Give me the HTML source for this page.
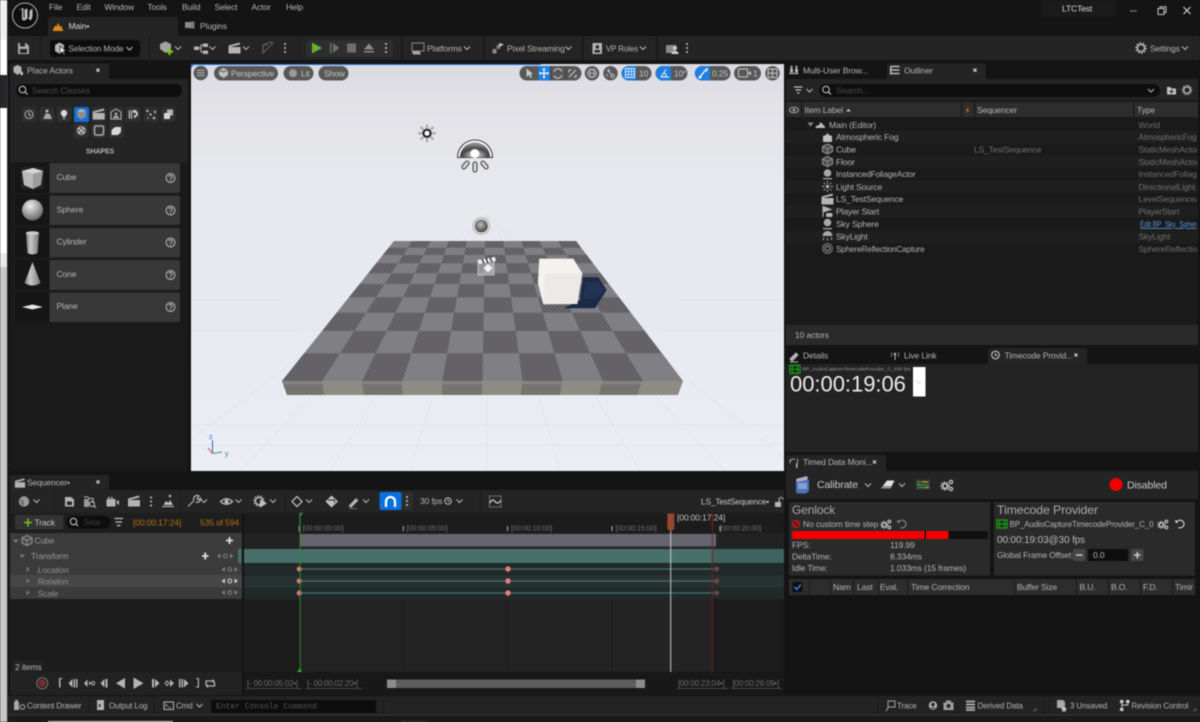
<!DOCTYPE html>
<html lang="en">
<head>
<meta charset="utf-8">
<title>LTCTest - Unreal Editor</title>
<style>
html,body{margin:0;padding:0;background:#141414;width:1200px;height:722px;overflow:hidden}
svg{display:block;position:absolute;left:0;top:0;filter:blur(.45px)}
text{font-family:"Liberation Sans",sans-serif;font-size:8.5px;fill:#b4b4b4;letter-spacing:-.12px}
.d{fill:#6f6f6f}
.w{fill:#d8d8d8}
.m{font-family:"Liberation Mono",monospace;font-size:8px;fill:#555;letter-spacing:0}
.o{fill:#b5700f}
.s{stroke:#b4b4b4;fill:none;stroke-width:1.1}
.f{fill:#b4b4b4}
.sep{fill:#1a1a1a}
</style>
</head>
<body>
<svg width="1200" height="722" viewBox="0 0 1200 722" xmlns="http://www.w3.org/2000/svg">
<defs>
<linearGradient id="sky" x1="0" y1="0" x2="0" y2="1">
<stop offset="0" stop-color="#dadae1"/><stop offset=".1" stop-color="#e2e2e7"/><stop offset=".3" stop-color="#e8e9ee"/><stop offset=".6" stop-color="#e6e9f0"/><stop offset="1" stop-color="#ebeef4"/>
</linearGradient>
<linearGradient id="cyl" x1="0" y1="0" x2="1" y2="0"><stop offset="0" stop-color="#777"/><stop offset=".35" stop-color="#c9c9c9"/><stop offset="1" stop-color="#777"/></linearGradient>
<radialGradient id="sph" cx=".4" cy=".3" r=".8"><stop offset="0" stop-color="#eee"/><stop offset="1" stop-color="#555"/></radialGradient>
<radialGradient id="sph2" cx=".45" cy=".4" r=".7"><stop offset="0" stop-color="#bdbdbd"/><stop offset="1" stop-color="#2e2e2e"/></radialGradient>
<radialGradient id="dome" cx=".5" cy=".85" r=".85"><stop offset="0" stop-color="#eee"/><stop offset=".5" stop-color="#444"/><stop offset="1" stop-color="#aaa"/></radialGradient>
<pattern id="tex" width="4" height="4" patternUnits="userSpaceOnUse"><rect width="2" height="2" fill="#fff" opacity=".06"/><rect x="2" y="2" width="2" height="2" fill="#fff" opacity=".06"/></pattern>
<clipPath id="typeclip"><rect x="1136" y="118" width="61" height="140"/></clipPath>
<clipPath id="vp"><rect x="191" y="64" width="593" height="407"/></clipPath>
<path id="chev" d="M-3-1.5 0 1.5 3-1.5" fill="none" stroke="#b4b4b4" stroke-width="1.1"/>
<g id="dots"><circle cy="-4" r="1" fill="#c8c8c8"/><circle r="1" fill="#c8c8c8"/><circle cy="4" r="1" fill="#c8c8c8"/></g>
<g id="gear"><circle r="3.6" fill="none" stroke="#b4b4b4" stroke-width="1.5"/><circle r="5" fill="none" stroke="#b4b4b4" stroke-width="1.5" stroke-dasharray="1.6 1.5"/></g>
<g id="gears"><circle cx="-2" cy="1" r="2.4" fill="none" stroke="#cfcfcf" stroke-width="1.5"/><circle cx="-2" cy="1" r="4" fill="none" stroke="#cfcfcf" stroke-width="1.3" stroke-dasharray="1.5 1.4"/><circle cx="4" cy="-3" r="1.6" fill="none" stroke="#cfcfcf" stroke-width="1.2"/><circle cx="4" cy="4" r="1.6" fill="none" stroke="#cfcfcf" stroke-width="1.2"/></g>
<g id="clap"><rect x="-6" y="-1" width="12" height="6.5" fill="#b4b4b4"/><path d="M-6-2.5 5-5.5 5.6-3.5-5.5-.8z" fill="#b4b4b4"/></g>
<g id="mesh"><path d="M0-5 5-2.5 5 2.5 0 5-5 2.5-5-2.5z" fill="#4a4a4a" stroke="#8e8e8e" stroke-width="1.1"/><path d="M-5-2.5 0 0 5-2.5M0 0V5" stroke="#8e8e8e" stroke-width="1" fill="none"/></g>
<g id="film"><rect x="-5" y="-4" width="10" height="8" fill="none" stroke="#0fa80f" stroke-width="1.2"/><path d="M-2.5-4V4M2.5-4V4M-5 0H5" stroke="#0fa80f" stroke-width="1"/></g>
<g id="undo"><path d="M-3.5-1A3.8 3.8 0 1 1-1.5 3.4" fill="none" stroke="#cfcfcf" stroke-width="1.2"/><path d="M-5.5-3.5-2.8-3.5-3.2-.3z" fill="#cfcfcf"/></g>
<g id="kf"><path d="M0 0 3.500-2.500V2.500z" fill="#7c7c7c"/><circle cx="8.300" r="1.900" fill="none" stroke="#7c7c7c" stroke-width="1.100"/><path d="M16.500 0 13-2.500V2.500z" fill="#7c7c7c"/></g>
<g id="help"><circle r="4.4" fill="none" stroke="#b4b4b4" stroke-width="1.1"/><path d="M-1.5-1.2A1.6 1.5 0 1 1 .5.3C0 .6 0 1 0 1.4" fill="none" stroke="#b4b4b4"/><circle cy="2.6" r=".6" fill="#b4b4b4"/></g>
</defs>

<!-- base -->
<rect width="1200" height="722" fill="#141414"/>

<!-- left strip from the window behind -->
<rect x="0" y="0" width="7" height="40" fill="#f0f0f0"/>
<rect x="0" y="40" width="7" height="35" fill="#fff"/>
<rect x="0" y="75" width="7" height="33" fill="#25272a"/>
<rect x="0" y="108" width="7" height="145" fill="#fff"/>
<rect x="0" y="253" width="7" height="14" fill="#e9e9e9"/>
<rect x="0" y="267" width="7" height="455" fill="#c6c6c6"/>
<rect x="7" y="0" width="1" height="722" fill="#333"/>

<!-- title bar -->
<circle cx="25" cy="15.5" r="12.5" fill="#0e0e0e" stroke="#b0b0b0" stroke-width="1"/>
<path d="M19 11C20.5 9.5 21.6 9 22 9V18.5C22 20.5 24 21 25.500 20L28 18 30.500 20.500C32 19 32.500 17 32.500 14V8.500C31 9.500 29.800 10.500 29.500 11.500V17L27.500 18.500V8.500L24.500 9.500V18.500C23.500 18 23.500 17.500 23.500 16V8C21.500 8.300 19.500 9.500 19 11Z" fill="#bdbdbd"/>
<text x="49" y="10">File</text>
<text x="76.500" y="10">Edit</text>
<text x="104.500" y="10">Window</text>
<text x="147.500" y="10">Tools</text>
<text x="182" y="10">Build</text>
<text x="214.500" y="10">Select</text>
<text x="251.500" y="10">Actor</text>
<text x="286" y="10">Help</text>

<path d="M48 36V20Q48 17 51 17H175Q178 17 178 20V36z" fill="#242424"/>
<path d="M53 30H63L61 25.500 59.500 26.500 58 22.500 56.500 26.500 55 25.500z" fill="#d88a16"/>
<rect x="53" y="29.500" width="10" height="1.500" fill="#d88a16"/>
<text x="68.500" y="29" class="w">Main•</text>
<circle cx="190" cy="25" r="3.200" fill="#8a8a8a"/><rect x="185" y="22" width="4" height="6" fill="#8a8a8a"/><rect x="191" y="21.500" width="3.500" height="7" fill="#777"/>
<text x="200" y="29">Plugins</text>

<path d="M1041 0H1116V14Q1116 17 1113 17H1044Q1041 17 1041 14z" fill="#1a1a1a"/>
<text x="1062" y="11.500" class="w">LTCTest</text>
<rect x="1130" y="10.500" width="7" height="1" fill="#8a8a8a"/>
<rect x="1158" y="8.500" width="6" height="6" fill="none" stroke="#c4c4c4"/><path d="M1160 8.500V6.800H1166V12.500H1164.500" fill="none" stroke="#c4c4c4"/>
<path d="M1183.500 7 1190.500 14M1190.500 7 1183.500 14" stroke="#d8d8d8" stroke-width="1.100"/>

<!-- main toolbar -->
<rect x="8" y="36" width="1192" height="24" fill="#242424"/>
<rect x="40" y="36" width="1" height="24" class="sep"/>
<rect x="149" y="36" width="1" height="24" class="sep"/>
<rect x="299" y="36" width="1" height="24" class="sep"/>
<rect x="401" y="36" width="2" height="24" class="sep"/>
<rect x="483" y="36" width="2" height="24" class="sep"/>
<rect x="582" y="36" width="2" height="24" class="sep"/>
<rect x="656" y="36" width="2" height="24" class="sep"/>
<path d="M18 43H26L29 46V54H18z" fill="#a9a9a9"/><rect x="20" y="43" width="5" height="3.500" fill="#242424"/><rect x="20" y="49" width="7" height="4" fill="#242424"/>
<rect x="50" y="40" width="90" height="17" rx="3" fill="#0d0d0d"/>
<path d="M55 45 59.500 42.500 64 45V51L59.500 54 55 51z" fill="#b4b4b4"/><path d="M60 46 66 51 63.500 51.500 65 54.500 63.800 55 62.500 52 60 54z" fill="#eee" stroke="#0d0d0d" stroke-width=".6"/>
<text x="68.500" y="51.300" textLength="55" lengthAdjust="spacingAndGlyphs">Selection Mode</text>
<use href="#chev" x="129.500" y="48.500"/>
<path d="M160 44 165.500 41.500 171 44V49L165.500 53 160 49z" fill="#a2a2a2"/>
<path d="M166 51.500H173M169.500 48V55" stroke="#7ec829" stroke-width="2.200"/>
<use href="#chev" x="178" y="48"/>
<rect x="194" y="46.500" width="5" height="3.500" class="f"/><rect x="203" y="43.500" width="5" height="3.500" class="f"/><rect x="203" y="50.500" width="5" height="3.500" class="f"/><path d="M199 48H201V45H203M201 48V52H203" class="s"/>
<use href="#chev" x="212.500" y="48"/>
<use href="#clap" x="234.500" y="48"/>
<use href="#chev" x="246" y="48"/>
<path d="M263 45 270 42 273 43 266 50 263 53z" fill="none" stroke="#5e5e5e" stroke-width="1.200"/><path d="M262 45H268" stroke="#5e5e5e"/>
<use href="#dots" x="285" y="48"/>
<rect x="306" y="40" width="87" height="17" rx="3" fill="#2e2e2e"/>
<path d="M312 42.500 322 48 312 53.500z" fill="#63b32e"/>
<rect x="330" y="43" width="1.500" height="10" fill="#6e6e6e"/><path d="M333 43 339.500 48 333 53z" fill="#6e6e6e"/>
<rect x="347" y="43.500" width="9" height="9" fill="#6e6e6e"/>
<path d="M364 49.500 369 43.500 374 49.500z" fill="#8a8a8a"/><rect x="364" y="51" width="10" height="1.500" fill="#8a8a8a"/>
<use href="#dots" x="386" y="48"/>

<rect x="412" y="43" width="12" height="8" fill="none" stroke="#8a8a8a"/><path d="M413 51H419.500L421 54.500H413.500L412 53z" fill="#a5a5a5"/>
<text x="427" y="51.300">Platforms</text>
<use href="#chev" x="467" y="48"/>
<rect x="492.500" y="49" width="4" height="4.500" fill="#8a8a8a"/><rect x="496.500" y="45" width="4" height="4" fill="#777"/><path d="M499 43V47L504 44.500z" fill="#c8c8c8"/>
<text x="507" y="51.300">Pixel Streaming</text>
<use href="#chev" x="568.500" y="48"/>
<rect x="592.500" y="43" width="9.500" height="11" fill="#b4b4b4"/><circle cx="597.300" cy="47" r="1.700" fill="#242424"/><rect x="594.500" y="50" width="5.500" height="2.500" fill="#242424"/>
<text x="606" y="51.300" textLength="32" lengthAdjust="spacingAndGlyphs">VP Roles</text>
<use href="#chev" x="643" y="48"/>
<rect x="666" y="45" width="10" height="8" fill="#8a8a8a"/><circle cx="675" cy="48" r="2" fill="#d0d0d0"/><path d="M671.500 52.500Q675 49.500 678.500 52.500V54H671.500z" fill="#d0d0d0"/>
<use href="#dots" x="687" y="48"/>
<use href="#gear" x="1141" y="48"/>
<text x="1150" y="51.300">Settings</text>
<use href="#chev" x="1185" y="48"/>

<!-- Place Actors panel -->
<rect x="10" y="64" width="178" height="407" fill="#1a1a1a"/>
<rect x="10" y="64" width="178" height="15" fill="#141414"/>
<path d="M10 79V65.500Q10 63.500 12 63.500H107Q109 63.500 109 65.500V79z" fill="#242424"/>
<path d="M13.500 67 17.500 65 21.500 67V72L17.500 75 13.500 72z" fill="#b0b0b0"/><path d="M20 73.500H23.500M21.700 71.500V75.500" stroke="#ddd" stroke-width="1.100"/>
<text x="27" y="73.500">Place Actors</text>
<path d="M96.500 68.700 99.500 71.700M99.500 68.700 96.500 71.700" stroke="#d8d8d8" stroke-width="1.100"/>
<rect x="10" y="79" width="178" height="83" fill="#242424"/>
<rect x="16" y="84" width="166" height="13" rx="6.500" fill="#0e0e0e"/>
<circle cx="22.500" cy="89.500" r="3.300" fill="none" stroke="#d0d0d0" stroke-width="1"/><path d="M25 92 27.500 94.500" stroke="#d0d0d0" stroke-width="1.100"/>
<text x="32" y="93.300" style="fill:#4c4c4c">Search Classes</text>
<g fill="#2f2f2f">
<rect x="22" y="107" width="14.500" height="15" rx="2"/><rect x="39.500" y="107" width="14.500" height="15" rx="2"/><rect x="57" y="107" width="14.500" height="15" rx="2"/><rect x="91.500" y="107" width="14.500" height="15" rx="2"/><rect x="109" y="107" width="14.500" height="15" rx="2"/><rect x="126" y="107" width="14.500" height="15" rx="2"/><rect x="144" y="107" width="14.500" height="15" rx="2"/><rect x="161" y="107" width="14.500" height="15" rx="2"/>
<rect x="74" y="123" width="14.500" height="15" rx="2"/><rect x="91.500" y="123" width="14.500" height="15" rx="2"/><rect x="109" y="123" width="14.500" height="15" rx="2"/>
</g>
<rect x="74" y="107" width="15" height="15" rx="2" fill="#0a6fe0"/>
<path d="M77 110.500 81.500 109 86 110.500V117L81.500 119.500 77 117z" fill="#8d8d8d"/><path d="M77 110.500 81.500 112 86 110.500 81.500 109z" fill="#b5b5b5"/>
<circle cx="29" cy="114.500" r="4" fill="none" stroke="#a9a9a9" stroke-width="1.100"/><path d="M29 112V114.800L31 115.800" class="s"/>
<circle cx="47" cy="111" r="1.500" class="f"/><path d="M43 119 46 113 50 114 52 119z" fill="#a5a5a5"/>
<path d="M64 110A3.200 3.200 0 0 1 65.500 116V117H62.500V116A3.200 3.200 0 0 1 64 110z" fill="#d8d8d8"/><rect x="62.500" y="118" width="3" height="1" fill="#b4b4b4"/>
<use href="#clap" x="98.700" y="114"/>
<path d="M111 112 116 109 121 112V119H111z" fill="none" stroke="#b4b4b4"/><circle cx="116" cy="114" r="1.400" class="f"/><rect x="113.500" y="116" width="5" height="2" class="f"/>
<rect x="128.700" y="110.500" width="1.500" height="8" class="f"/><rect x="131" y="110" width="1.200" height="9" class="f"/><path d="M133 110H136L138 113V115L135 118H134V115H136V113H133z" fill="#c8c8c8"/>
<circle cx="147.500" cy="111" r="1.200" class="f"/><circle cx="155" cy="112" r="1.200" class="f"/><circle cx="150.500" cy="114.500" r="1.200" class="f"/><circle cx="154" cy="118" r="1.300" class="f"/><circle cx="148" cy="118" r=".8" class="f"/>
<rect x="167" y="109.500" width="6" height="6" fill="#b4b4b4"/><rect x="164" y="113" width="6" height="6" fill="#d8d8d8"/>
<circle cx="81.300" cy="130.500" r="4.500" class="f"/><circle cx="81.300" cy="128" r="1" fill="#2f2f2f"/><circle cx="81.300" cy="133" r="1" fill="#2f2f2f"/><circle cx="78.800" cy="130.500" r="1" fill="#2f2f2f"/><circle cx="83.800" cy="130.500" r="1" fill="#2f2f2f"/>
<rect x="94.500" y="126" width="9" height="9" rx="1.500" fill="none" stroke="#a8a8a8" stroke-width="1.500"/>
<path d="M111.500 130 115 127H121V132L118 135H111.500z" fill="#d8d8d8"/>
<text x="86" y="153.500" style="font-size:7px;font-weight:bold">SHAPES</text>
<!-- shape items -->
<g fill="#383838">
<rect x="15" y="163" width="165" height="30" rx="2.500"/><rect x="15" y="195.500" width="165" height="29.500" rx="2.500"/><rect x="15" y="228" width="165" height="29.500" rx="2.500"/><rect x="15" y="260" width="165" height="30" rx="2.500"/><rect x="15" y="292.500" width="165" height="29.500" rx="2.500"/>
</g>
<g fill="#161616">
<path d="M17.500 163H49.500V193H17.500Q15 193 15 190.500V165.500Q15 163 17.500 163z"/><path d="M17.500 195.500H49.500V225H17.500Q15 225 15 222.500V198Q15 195.500 17.500 195.500z"/><path d="M17.500 228H49.500V257.500H17.500Q15 257.500 15 255V230.500Q15 228 17.500 228z"/><path d="M17.500 260H49.500V290H17.500Q15 290 15 287.500V262.500Q15 260 17.500 260z"/><path d="M17.500 292.500H49.500V322H17.500Q15 322 15 319.500V295Q15 292.500 17.500 292.500z"/>
</g>
<rect x="21" y="167" width="23" height="22" fill="#222"/>
<path d="M22 171 33 168 43 171 41 185 33 189 24 185z" fill="#9c9c9c"/><path d="M22 171 33 168 43 171 33 174z" fill="#d4d4d4"/><path d="M22 171 33 174V189L24 185z" fill="#b8b8b8"/>
<circle cx="32.500" cy="210" r="10.500" fill="url(#sph)"/>
<path d="M26 233 27.500 253Q32.500 256 37.500 253L39 233z" fill="url(#cyl)"/><ellipse cx="32.500" cy="233" rx="6.500" ry="1.800" fill="#cfcfcf"/>
<path d="M32.500 262 24.500 283Q32.500 288 40.500 283z" fill="url(#cyl)"/>
<path d="M22 307 32.500 304.500 43 307 32.500 309.500z" fill="#e6e6e6"/>
<text x="56.500" y="180">Cube</text>
<text x="56.500" y="212.500">Sphere</text>
<text x="56.500" y="244.500">Cylinder</text>
<text x="56.500" y="277">Cone</text>
<text x="56.500" y="309">Plane</text>
<use href="#help" x="170.500" y="178"/>
<use href="#help" x="170.500" y="210.500"/>
<use href="#help" x="170.500" y="242.500"/>
<use href="#help" x="170.500" y="275"/>
<use href="#help" x="170.500" y="307"/>

<!-- Viewport -->
<rect x="191" y="64" width="593" height="407" fill="url(#sky)"/>
<rect x="191" y="64" width="350" height="1" fill="#1b7ae0"/>
<path d="M191 64H195L191 68z" fill="#1b7ae0"/>
<g clip-path="url(#vp)">
<path d="M487 215 150 471M487 215 240 471M487 215 330 471M487 215 410 471M487 215 487 471M487 215 560 471M487 215 640 471M487 215 725 471M487 215 800 471M191 425H784M191 445H784M191 300H282M680 300H784M191 330H300M660 330H784" stroke="#dde0e8" stroke-width=".6" fill="none"/>
</g>
<!-- floor -->
<path d="M394 241H576L683 381H282z" fill="#7c7b7f"/>
<path fill-rule="evenodd" fill="#5f5d62" d="M388.600 247.700H581.100L586.700 255H382.800zM376.200 263.300H593L600.700 273.300H368.200zM359.600 284H608.900L619 297.300H349zM336.800 312.700H630.800L645 331H322zM304.200 353.300H662L683 381H282zM412.200 241H430.400L362.200 381H322.100zM448.600 241H466.800L442.400 381H402.300zM485 241H503.200L522.600 381H482.500zM521.400 241H539.600L602.800 381H562.700zM557.800 241H576L683 381H642.900z"/>
<path d="M394 241H576L683 381H282z" fill="url(#tex)"/>
<path d="M282 381H683L678 395H287z" fill="#8b8781"/>
<path d="M282 381H322L324 395H287zM362 381H402L402.500 395H364zM442 381H482L482 395H442zM522 381H562L560 395H521zM602 381H642L637 395H599z" fill="#726f6b"/>
<rect x="283" y="381" width="399" height="3" fill="#8a8883" opacity=".7"/>
<rect x="283" y="381" width="399" height="14" fill="url(#tex)"/>
<!-- shadow -->
<path d="M583 277.300H598.300L606.700 290 595 308.300H563.300L580 300z" fill="#1b2a46"/>
<path d="M586 282H598.300L604 290 595 299H583z" fill="#223252"/>
<!-- cube -->
<path d="M539.300 258.700H573.300L582.300 273.300 577.300 304 543.300 304.300 538 283.300z" fill="#efeeea"/>
<path d="M545 273.300H582.300L577.300 304 543.300 304.300z" fill="#eceae7"/>
<path d="M539.300 258.700H573.300L582.300 273.300H545L543.300 304.300 538 283.300z" fill="#f3f2ef"/>
<!-- sun icon -->
<g transform="translate(427 133.300)">
<circle r="3.600" fill="#fff" stroke="#222" stroke-width="2.200"/>
<g stroke="#a8a8a8" stroke-width="2.200" stroke-linecap="round"><path d="M0-6V-8M0 6V8M-6 0H-8M6 0H8M-4.300-4.300-5.700-5.700M4.300-4.300 5.700-5.700M-4.300 4.300-5.700 5.700M4.300 4.300 5.700 5.700"/></g>
</g>
<!-- sky light icon -->
<path d="M457.500 157.500A17.500 17.500 0 0 1 492.500 157.500z" fill="#fff" stroke="#333" stroke-width="1"/>
<path d="M459.800 157.500A15.200 15.200 0 0 1 490.200 157.500z" fill="url(#dome)"/>
<circle cx="474.800" cy="153.500" r="4.500" fill="#fff"/>
<g fill="#d8d8d8" stroke="#3a3a3a" stroke-width="1"><rect x="473" y="162" width="4" height="10" rx="2"/><rect x="463.500" y="160.500" width="4" height="9" rx="2" transform="rotate(40 465.500 165)"/><rect x="482.500" y="160.500" width="4" height="9" rx="2" transform="rotate(-40 484.500 165)"/></g>
<!-- sphere reflection -->
<circle cx="481.300" cy="226" r="8.300" fill="#e8e8ea" stroke="#888" stroke-width=".6"/><circle cx="481.300" cy="226" r="6.500" fill="url(#sph2)"/>
<!-- clapper icon -->
<g transform="translate(486 266)">
<rect x="-8" y="-6" width="16" height="15" fill="#cfcfd4" fill-opacity=".5" stroke="#c8c8c8" stroke-width=".8"/>
<path d="M-8-6 9-9 10-5-7-2z" fill="#eee"/><path d="M-4-7-2-2.500M0-8 2-3M4-8.500 6-4" stroke="#333" stroke-width="1.400"/>
<path d="M-6-1.500H3V3H-6z" fill="#8e8e8e" opacity=".6"/>
<path d="M2-2 6.500 2 2 6.500-2.500 2z" fill="#f3f3f3"/>
<circle cx="-1" cy="-9" r="1" fill="#4a90e0"/>
</g>
<!-- axis gizmo -->
<path d="M212.500 453.500V440" stroke="#2a66d8" stroke-width="1"/><path d="M212.500 453.500 222 452" stroke="#4aa04a" stroke-width="1"/><path d="M212.500 453.500 208 448" stroke="#d85a50" stroke-width="1"/>
<text x="209" y="439" style="font-size:7px;fill:#2a66d8">z</text>
<text x="225" y="456" style="font-size:7px;fill:#3d8a3d">y</text>

<!-- viewport toolbar -->
<g fill="#585858">
<circle cx="200.800" cy="73" r="7.200"/>
<rect x="214" y="66" width="64" height="14.500" rx="7.250"/>
<rect x="283.500" y="66" width="30" height="14.500" rx="7.250"/>
<rect x="318.500" y="66" width="30" height="14.500" rx="7.250"/>
<rect x="519.500" y="66" width="62" height="14.500" rx="7.250"/>
<circle cx="592" cy="73.250" r="7.250"/>
<circle cx="610.500" cy="73.250" r="7.250"/>
<rect x="621.500" y="66" width="30" height="14.500" rx="7.250"/>
<rect x="655.500" y="66" width="32" height="14.500" rx="7.250"/>
<rect x="695" y="66" width="35.500" height="14.500" rx="7.250"/>
<rect x="734" y="66" width="27" height="14.500" rx="7.250"/>
<circle cx="772.500" cy="73.250" r="7.250"/>
</g>
<path d="M197 70.500H204.500M197 73H204.500M197 75.500H204.500" stroke="#b8b8b8"/>
<path d="M219 70 223.500 68 228 70V75L223.500 78 219 75z" fill="#c0c0c0"/><path d="M219 70 223.500 72 228 70" stroke="#585858" fill="none"/>
<text x="231" y="76.300" style="fill:#c4c4c4">Perspective</text>
<circle cx="293" cy="73.200" r="4" fill="#9a9a9a"/>
<text x="301" y="76.300" style="fill:#c4c4c4">Lit</text>
<text x="324" y="76.300" style="fill:#c4c4c4">Show</text>
<path d="M538.300 66H550V80.500H538.300z" fill="#1f7fe0"/>
<path d="M526.500 68.500V77L529 75 530.500 78 532 77.500 530.500 74.500 533 74z" fill="#c8c8c8"/>
<path d="M544 69V77.500M540 73.300H548" stroke="#fff" stroke-width="1.200"/><path d="M544 67.800 545.800 69.800H542.200zM544 78.800 545.800 76.800H542.200zM538.900 73.300 540.900 71.500V75.100zM549.100 73.300 547.100 71.500V75.100z" fill="#fff"/>
<path d="M554 72A4.200 4.200 0 0 1 562 71.500M562 75A4.200 4.200 0 0 1 554 75.500" fill="none" stroke="#c8c8c8" stroke-width="1.100"/>
<rect x="550.500" y="66" width=".8" height="14.500" fill="#3c3c3c"/><rect x="565.500" y="66" width=".8" height="14.500" fill="#3c3c3c"/>
<path d="M569 77 576 70M569 70H571.500M569 70V72.500M576 77H573.500M576 77V74.500" stroke="#c8c8c8" stroke-width="1.100"/>
<circle cx="592" cy="73.250" r="4.300" fill="none" stroke="#c0c0c0"/><ellipse cx="592" cy="73.250" rx="2" ry="4.300" fill="none" stroke="#c0c0c0" stroke-width=".8"/><path d="M587.700 73.250H596.300" stroke="#c0c0c0" stroke-width=".8"/>
<circle cx="608.500" cy="70.500" r="1.300" fill="#c0c0c0"/><circle cx="612.500" cy="76" r="1.600" fill="none" stroke="#c0c0c0"/><path d="M609 71.500 611.500 74.500M606 74.500 608 76" stroke="#c0c0c0"/>
<path d="M629 66H636V80.500H629A7.250 7.250 0 0 1 629 66z" fill="#1f7fe0"/>
<rect x="625.500" y="68.500" width="9" height="9" fill="none" stroke="#e8f0ff"/><path d="M625.500 71.500H634.500M625.500 74.500H634.500M628.500 68.500V77.500M631.500 68.500V77.500" stroke="#e8f0ff" stroke-width=".7"/>
<text x="639" y="76.300" style="fill:#c4c4c4">10</text>
<path d="M663 66H671V80.500H663A7.250 7.250 0 0 1 663 66z" fill="#1f7fe0"/>
<path d="M661 77H669M661 77 666 69.500M664.500 73A4 4 0 0 1 666 77" stroke="#fff" fill="none"/>
<text x="674" y="76.300" style="fill:#c4c4c4">10°</text>
<path d="M702 66H710V80.500H702A7.250 7.250 0 0 1 702 66z" fill="#1f7fe0"/>
<path d="M699.500 77.500 705.500 70M705.500 69.500 707 69 706.500 71.500" stroke="#fff" stroke-width="1.300" fill="none"/><rect x="698.800" y="76" width="2.500" height="2.500" fill="#fff"/>
<text x="712" y="76.300" style="fill:#c4c4c4">0.25</text>
<rect x="738.500" y="69" width="9" height="8" rx="1" fill="none" stroke="#c8c8c8"/><path d="M748 73 751 71V75.500z" fill="#c8c8c8"/>
<text x="753" y="76.300" style="fill:#c4c4c4">1</text>
<rect x="768" y="69" width="9" height="8.500" rx="1" fill="none" stroke="#c8c8c8"/><path d="M768 73.200H777M772.500 69V77.500" stroke="#c8c8c8"/>

<!-- Outliner -->
<rect x="786" y="79" width="412" height="246" fill="#1a1a1a"/>
<path d="M887 79V65.500Q887 63.500 889 63.500H984Q986 63.500 986 65.500V79z" fill="#242424"/>
<path d="M789 73.500H798.500" stroke="#b4b4b4" stroke-width="1.200"/><rect x="790" y="68.500" width="3" height="4" fill="#b4b4b4"/><rect x="795" y="68.500" width="3" height="4" fill="#b4b4b4"/><circle cx="791.500" cy="67" r="1.200" fill="#b4b4b4"/><circle cx="796.500" cy="67" r="1.200" fill="#b4b4b4"/>
<text x="803" y="73.500">Multi-User Brow...</text>
<path d="M891 66.500H899.500M891 70H899.500M891 73.500H899.500" stroke="#bcbcbc" stroke-width="1.400"/><rect x="890" y="66" width="1.500" height="8.500" fill="#bcbcbc"/>
<text x="904" y="73.500">Outliner</text>
<path d="M973.500 68.700 976.500 71.700M976.500 68.700 973.500 71.700" stroke="#d8d8d8" stroke-width="1.100"/>
<rect x="786" y="79" width="412" height="21" fill="#242424"/>
<path d="M794 87H802.500M795.500 90H801M797 93H799.500" stroke="#c0c0c0" stroke-width="1.200"/>
<use href="#chev" x="809.500" y="90.500"/>
<rect x="819" y="84" width="341" height="13" rx="6.500" fill="#0e0e0e"/>
<circle cx="826" cy="89.500" r="3.300" fill="none" stroke="#d0d0d0"/><path d="M828.500 92 831 94.500" stroke="#d0d0d0" stroke-width="1.100"/>
<text x="836" y="93.300" style="fill:#4c4c4c">Search...</text>
<use href="#chev" x="1151" y="90.500"/>
<path d="M1167 87H1170.500L1171.500 88.500H1176V94.500H1167z" fill="#c0c0c0"/><path d="M1171.500 89.500V93.500M1169.500 91.500H1173.500" stroke="#242424"/>
<g transform="translate(1187 90) scale(.9)"><use href="#gear"/></g>
<rect x="786" y="102" width="412" height="15" fill="#2d2d2d"/>
<rect x="801" y="102" width="1.200" height="15" fill="#1a1a1a"/><rect x="961" y="102" width="1.200" height="15" fill="#1a1a1a"/><rect x="974" y="102" width="1.200" height="15" fill="#1a1a1a"/><rect x="1133" y="102" width="1.200" height="15" fill="#1a1a1a"/>
<ellipse cx="794" cy="110" rx="4.500" ry="2.700" fill="none" stroke="#a8a8a8"/><circle cx="794" cy="110" r="1.400" fill="#a8a8a8"/>
<text x="804.500" y="112.800">Item Label</text>
<path d="M846 111.500H851L848.500 108.500z" fill="#b4b4b4"/>
<path d="M969 106 965.500 111 967.500 110.500 966 114 969.500 109.500 967.500 109.800z" fill="#d07a14"/>
<text x="977" y="112.800">Sequencer</text>
<text x="1137" y="112.800">Type</text>
<g fill="#1f1f1f"><rect x="786" y="130.500" width="412" height="12.500"/><rect x="786" y="155.500" width="412" height="12.500"/><rect x="786" y="180.500" width="412" height="12.500"/><rect x="786" y="205.500" width="412" height="12.500"/><rect x="786" y="230.500" width="412" height="12.500"/></g>
<path d="M807.500 122.500H813.500L810.500 126.500z" fill="#8a8a8a"/>
<path d="M815.500 128H825V126.500L822.500 124 820.500 122 819 125 816 126z" fill="#b8b8b8"/>
<text x="829" y="127.800">Main (Editor)</text>
<path d="M823 142V136L826 135 827.500 133 829 135 832 136V142z" fill="#c0c0c0"/>
<use href="#mesh" x="827.500" y="149"/>
<use href="#mesh" x="827.500" y="161.500"/>
<circle cx="827.500" cy="173" r="3.800" fill="#a8a8a8"/><rect x="823" y="178" width="9" height="1.300" fill="#a8a8a8"/>
<circle cx="827.500" cy="186.500" r="1.700" fill="#b4b4b4"/><path d="M827.500 181V183.500M827.500 189.500V192M822 186.500H824.500M830.500 186.500H833M823.700 182.700 825.300 184.300M829.700 188.700 831.300 190.300M831.300 182.700 829.700 184.300M825.300 188.700 823.700 190.300" stroke="#a8a8a8"/>
<use href="#clap" x="827.500" y="199"/>
<path d="M823 206V217M823 206.500 831 209.500 823 212" stroke="#b4b4b4" fill="#b4b4b4"/><rect x="826" y="213" width="6.500" height="4" rx="1.500" fill="#b4b4b4"/>
<circle cx="827.500" cy="222.500" r="3.800" fill="#a8a8a8"/><rect x="823" y="228" width="9" height="1.300" fill="#a8a8a8"/>
<path d="M822.500 236A5 5 0 0 1 832.500 236z" fill="#a8a8a8"/><path d="M824 237.500 823 240M827.500 238V240.500M831 237.500 832 240" stroke="#a8a8a8"/>
<circle cx="827.500" cy="248.500" r="4.800" fill="none" stroke="#8a8a8a"/><circle cx="827.500" cy="248.500" r="2.400" fill="none" stroke="#b4b4b4"/>
<text x="836" y="140">Atmospheric Fog</text>
<text x="836" y="152.300">Cube</text>
<text x="836" y="165">Floor</text>
<text x="836" y="177" textLength="79.500" lengthAdjust="spacingAndGlyphs">InstancedFoliageActor</text>
<text x="836" y="190">Light Source</text>
<text x="836" y="202">LS_TestSequence</text>
<text x="836" y="214.500">Player Start</text>
<text x="836" y="227">Sky Sphere</text>
<text x="836" y="239.500">SkyLight</text>
<text x="836" y="252" textLength="88.500" lengthAdjust="spacingAndGlyphs">SphereReflectionCapture</text>
<text x="974" y="152.300" class="d">LS_TestSequence</text>
<g clip-path="url(#typeclip)">
<text x="1138.500" y="127.800" class="d">World</text>
<text x="1138.500" y="140" class="d" textLength="58" lengthAdjust="spacingAndGlyphs">AtmosphericFog</text>
<text x="1138.500" y="152.300" class="d">StaticMeshActor</text>
<text x="1138.500" y="165" class="d">StaticMeshActor</text>
<text x="1138.500" y="177" class="d">InstancedFoliageActor</text>
<text x="1138.500" y="190" class="d">DirectionalLight</text>
<text x="1138.500" y="202" class="d" textLength="76" lengthAdjust="spacingAndGlyphs">LevelSequenceActor</text>
<text x="1138.500" y="214.500" class="d">PlayerStart</text>
<text x="1140" y="227" style="fill:#5e92d8;text-decoration:underline" textLength="60" lengthAdjust="spacingAndGlyphs">Edit BP_Sky_Sphere</text>
<text x="1138.500" y="239.500" class="d">SkyLight</text>
<text x="1138.500" y="252" class="d">SphereReflectionCapture</text>
</g>
<rect x="786" y="325" width="412" height="20" fill="#2a2a2a"/>
<text x="795" y="338">10 actors</text>

<!-- Details tabs -->
<path d="M988 364V350Q988 348 990 348H1085Q1087 348 1087 350V364z" fill="#242424"/>
<path d="M790 359 796 353 798 355 792 361zM790 362H798" stroke="#b4b4b4" fill="#b4b4b4"/>
<text x="803" y="358.500">Details</text>
<path d="M891.500 352.500V357M898.500 352.500V357" stroke="#7a7a7a"/><circle cx="895" cy="354" r="1.300" class="f"/><path d="M895 355V360" stroke="#b4b4b4"/>
<text x="904" y="358.500">Live Link</text>
<circle cx="995.500" cy="355" r="3.800" fill="none" stroke="#c4c4c4" stroke-width="1.100"/><path d="M995.500 353V355.500H997.500" stroke="#c4c4c4" fill="none"/>
<text x="1004.500" y="358.500">Timecode Provid...</text>
<path d="M1074.500 353.500 1077.500 356.500M1077.500 353.500 1074.500 356.500" stroke="#d8d8d8" stroke-width="1.100"/>
<rect x="786" y="364" width="412" height="88" fill="#232323"/>
<use href="#film" x="795" y="369.300"/>
<text x="802.500" y="370.700" style="font-size:4.500px;fill:#9a9a9a;letter-spacing:0" textLength="108" lengthAdjust="spacingAndGlyphs">BP_AudioCaptureTimecodeProvider_C_030 fps</text>
<text x="790" y="391.300" style="font-size:22px;fill:#ededed;letter-spacing:-.03px">00:00:19:06</text>
<rect x="913" y="367" width="12.500" height="29.500" fill="#fff"/>
<use href="#chev" x="919" y="382" opacity=".4"/>

<!-- Timed Data Monitor -->
<path d="M786 471V457Q786 455 788 455H884Q886 455 886 457V471z" fill="#242424"/>
<path d="M790.500 461.500A2.500 2.500 0 0 1 795 460M790 463.500V459.500M797.500 458.500V463" stroke="#9a9a9a" fill="none"/>
<rect x="796" y="463" width="1.500" height="5" fill="#b4b4b4"/>
<text x="803" y="465">Timed Data Moni...</text>
<path d="M873 460.500 876 463.500M876 460.500 873 463.500" stroke="#d8d8d8" stroke-width="1.100"/>
<rect x="786" y="471" width="412" height="28" fill="#242424"/>
<path d="M796 480H809V491L806 493.500H797.500L796 492z" fill="#4f71b5"/><path d="M796 479 807 476 808 479.500 797 482z" fill="#aab4c8"/><path d="M798 483H807V489H798z" fill="#86a0d4"/>
<text x="817" y="488" style="font-size:10.500px;fill:#c8c8c8">Calibrate</text>
<use href="#chev" x="868" y="485"/>
<path d="M881 488.500 887 480.500H894.500L890.500 488.500z" fill="#e0e0e0"/><path d="M881 488.500 883 486H892L890.500 488.500z" fill="#909090"/>
<use href="#chev" x="902" y="485"/>
<rect x="916" y="479.500" width="14" height="10" fill="#3a3a3a"/><path d="M917 482H921M917 485H929M917 487.500H925" stroke="#2aa03a" stroke-width="1"/><path d="M922 482H928M925 487.500H929" stroke="#d8b020"/><path d="M917 484H920" stroke="#d04040"/>
<use href="#gears" x="947" y="485"/>
<circle cx="1116" cy="484.500" r="6.500" fill="#f00000"/>
<text x="1127" y="488.500" style="font-size:10.500px;fill:#c8c8c8">Disabled</text>

<rect x="789" y="502" width="201" height="73.500" fill="#2a2a2a"/>
<rect x="994" y="502" width="201" height="73.500" fill="#2a2a2a"/>
<text x="792" y="514" style="font-size:12px;fill:#aaa">Genlock</text>
<circle cx="796" cy="524" r="3.500" fill="none" stroke="#e01010" stroke-width="1.200"/><path d="M793.500 526.500 798.500 521.500" stroke="#e01010" stroke-width="1.200"/>
<text x="803" y="527">No custom time step</text>
<g transform="translate(886 524) scale(.85)"><use href="#gears"/></g>
<use href="#undo" x="902" y="524" opacity=".55"/>
<rect x="792" y="531" width="196" height="8" fill="#101010"/>
<rect x="792" y="531" width="132.500" height="8" fill="#f40000"/>
<rect x="926" y="531" width="22.500" height="8" fill="#f40000"/>
<text x="792" y="548">FPS:</text><text x="890" y="548">119.99</text>
<text x="792" y="559.500">DeltaTime:</text><text x="890" y="559.500">8.334ms</text>
<text x="792" y="571">Idle Time:</text><text x="890" y="571">1.033ms (15 frames)</text>
<text x="997" y="514" style="font-size:12px;fill:#aaa" textLength="101" lengthAdjust="spacingAndGlyphs">Timecode Provider</text>
<use href="#film" x="1002" y="524"/>
<text x="1009.500" y="527" textLength="144" lengthAdjust="spacingAndGlyphs">BP_AudioCaptureTimecodeProvider_C_0</text>
<g transform="translate(1163 524) scale(.85)"><use href="#gears"/></g>
<use href="#undo" x="1180" y="524"/>
<text x="997" y="543.200" style="font-size:10px;fill:#b8b8b8">00:00:19:03@30 fps</text>
<text x="997" y="558">Global Frame Offset:</text>
<rect x="1073" y="549" width="12.500" height="12" rx="1.500" fill="#454545"/><rect x="1076" y="554.300" width="6.500" height="1.500" fill="#ccc"/>
<rect x="1088" y="549" width="40" height="12" rx="1.500" fill="#0e0e0e"/>
<text x="1093" y="557.800">0.0</text>
<rect x="1131" y="549" width="12.500" height="12" rx="1.500" fill="#454545"/><path d="M1134 555H1140.500M1137.300 552V558.500" stroke="#ccc" stroke-width="1.500"/>
<rect x="789" y="579" width="406" height="16" fill="#2d2d2d"/>
<g fill="#1a1a1a"><rect x="809" y="579" width="1" height="16"/><rect x="830" y="579" width="1" height="16"/><rect x="853" y="579" width="1" height="16"/><rect x="878" y="579" width="1" height="16"/><rect x="907" y="579" width="1" height="16"/><rect x="1014" y="579" width="1" height="16"/><rect x="1076" y="579" width="1" height="16"/><rect x="1108" y="579" width="1" height="16"/><rect x="1140" y="579" width="1" height="16"/><rect x="1172" y="579" width="1" height="16"/></g>
<rect x="792.500" y="582" width="10" height="10" rx="1" fill="#0e0e0e"/>
<path d="M794.500 587 796.700 589.500 800.800 584.500" stroke="#2a86ee" stroke-width="1.400" fill="none"/>
<text x="833" y="590">Nam</text><text x="857" y="590">Last</text><text x="880" y="590">Eval.</text>
<text x="911" y="590">Time Correction</text><text x="1017" y="590">Buffer Size</text>
<text x="1079.500" y="590">B.U.</text><text x="1111" y="590">B.O.</text><text x="1143" y="590">F.D.</text><text x="1175" y="590">Timir</text>

<!-- Sequencer -->
<rect x="10" y="490" width="774" height="205" fill="#1a1a1a"/>
<path d="M10 490V477Q10 475 12 475H107Q109 475 109 477V490z" fill="#242424"/>
<g transform="translate(20 483) scale(.85)"><use href="#clap"/></g>
<text x="27" y="485.500">Sequencer•</text>
<path d="M96.500 480.500 99.500 483.500M99.500 480.500 96.500 483.500" stroke="#d8d8d8" stroke-width="1.100"/>
<rect x="10" y="490" width="774" height="23" fill="#242424"/>
<circle cx="24" cy="501.500" r="5.200" fill="#9a9a9a"/><path d="M20 499Q24 499 24 503T22 506" fill="#707070"/>
<use href="#chev" x="36.500" y="501"/>
<rect x="54" y="490" width="1" height="23" class="sep"/>
<path d="M65 497H71L74 499.500V506.500H65z" class="f"/><rect x="67" y="501.500" width="5" height="3.500" fill="#242424"/>
<path d="M84 497H88L89 498.500H93V503" fill="none" stroke="#b4b4b4"/><rect x="84" y="499" width="5" height="8" fill="#999"/><circle cx="92" cy="504" r="2.500" fill="none" stroke="#c8c8c8"/><path d="M94 506 96 508" stroke="#c8c8c8"/>
<rect x="106.500" y="499" width="9" height="7.500" class="f"/><rect x="108" y="497" width="1.700" height="1.700" class="f"/><rect x="111" y="497" width="1.700" height="1.700" class="f"/><path d="M116 502 119 500V505.500z" class="f"/>
<use href="#clap" x="134" y="501"/>
<use href="#dots" x="151" y="501.500"/>
<circle cx="170" cy="496" r="1.300" class="f"/><path d="M162 506H174V507H162ZM163.500 505 166 501 168.500 503 170 500 173 505z" fill="#c0c0c0"/>
<rect x="180" y="490" width="1" height="23" class="sep"/>
<path d="M188 506.500 194 500.500M194 500.500A3.500 3.500 0 0 1 199 496L197 498.500 198.500 500 200.500 498A3.500 3.500 0 0 1 195.500 502" fill="none" stroke="#b4b4b4" stroke-width="1.200"/>
<use href="#chev" x="204" y="501"/>
<path d="M220.500 501.500Q226.500 496 232.500 501.500 226.500 507 220.500 501.500z" fill="none" stroke="#c0c0c0" stroke-width="1.200"/><circle cx="226.500" cy="501.500" r="2" fill="#c0c0c0"/>
<use href="#chev" x="238.500" y="501"/>
<use href="#gear" x="259" y="501"/><path d="M260 499.500 267 503.500 260 507.500z" fill="#c0c0c0"/>
<use href="#chev" x="273" y="501"/>
<rect x="285" y="490" width="1" height="23" class="sep"/>
<path d="M297 496.500 302 501.500 297 506.500 292 501.500z" fill="none" stroke="#c8c8c8" stroke-width="1.200"/>
<use href="#chev" x="309" y="501"/>
<path d="M331.500 495.500 338 501.500 331.500 507.500 325.500 501.500z" fill="#c0c0c0"/><path d="M328 500H334.500V503" stroke="#242424" fill="none"/>
<path d="M349 506 356 498.500 358 500.500 351 507.500zM349 508.500H357" fill="#b4b4b4" stroke="#b4b4b4" stroke-width=".6"/>
<use href="#chev" x="366" y="501"/>
<rect x="379.500" y="492" width="22" height="18" rx="2" fill="#0a6fe0"/>
<path d="M386 507V501.500A4.500 4.500 0 0 1 395 501.500V507" fill="none" stroke="#fff" stroke-width="2.300"/>
<rect x="402" y="492" width="11" height="18" fill="#2e2e2e"/>
<use href="#dots" x="407" y="501"/>
<text x="420" y="504">30 fps</text>
<circle cx="448" cy="501" r="3.200" fill="none" stroke="#b4b4b4" stroke-width="1.200"/><path d="M448 499.300V501.300H449.500" stroke="#b4b4b4" fill="none"/>
<use href="#chev" x="459.500" y="501"/>
<rect x="480" y="490" width="1" height="23" class="sep"/>
<rect x="489.500" y="496" width="11.500" height="11" fill="none" stroke="#707070"/><path d="M489.500 503Q493 498 495 501.500T501 500.500" fill="none" stroke="#d8d8d8" stroke-width="1.200"/>
<text x="701" y="504.300" style="fill:#c8c8c8" textLength="68" lengthAdjust="spacingAndGlyphs">LS_TestSequence•</text>
<rect x="775" y="502" width="6" height="5" class="f"/><path d="M779 502V499.500A2 2 0 0 1 783 499.500" class="s"/>

<!-- tree header -->
<rect x="10" y="513" width="232" height="20" fill="#1e1e1e"/>
<rect x="15" y="515" width="48.500" height="14.500" rx="2" fill="#333"/>
<path d="M24 522.500H32M28 518.500V526.500" stroke="#72c42a" stroke-width="1.500"/>
<text x="34.500" y="525.500" style="fill:#c8c8c8">Track</text>
<rect x="66.500" y="516" width="44" height="12.500" rx="6" fill="#0e0e0e"/>
<circle cx="73.500" cy="521.500" r="3.200" fill="none" stroke="#d0d0d0"/><path d="M76 524 78 526" stroke="#d0d0d0"/>
<text x="83.500" y="525" style="fill:#3d3d3d">Sear</text>
<path d="M114.500 518.500H123M115.500 522H122M117 525.500H120.500" stroke="#c0c0c0" stroke-width="1.300"/>
<text x="133" y="525.500" class="o">[00:00:17:24]</text>
<text x="200" y="525.500" class="o">535 of 594</text>
<!-- tree rows -->
<rect x="10" y="533" width="232" height="66" fill="#3b3b3b"/>
<rect x="10" y="575" width="232" height="12" fill="#464646"/>
<path d="M13 539.500H18.500L15.700 543z" fill="#7a7a7a"/>
<use href="#mesh" x="27" y="540.500"/>
<text x="34.500" y="543.500" style="fill:#9a9a9a">Cube</text>
<path d="M226 540.500H233M229.500 537V544" stroke="#e0e0e0" stroke-width="1.800"/>
<path d="M19.500 554.500H25L22.200 558z" fill="#7a7a7a"/>
<text x="31" y="559" style="fill:#9a9a9a">Transform</text>
<path d="M202 556H208.500M205.200 552.500V559.500" stroke="#e0e0e0" stroke-width="1.800"/>
<use href="#kf" x="217" y="556"/>
<rect x="238" y="549" width="3.500" height="14" fill="#47706a"/>
<path d="M26.500 566.500V572L30 569.300zM26.500 578V583.500L30 580.800zM26.500 590V595.500L30 592.800z" fill="#6e6e6e"/>
<text x="37.500" y="573" style="font-style:italic;fill:#8f8f8f">Location</text>
<text x="37.500" y="584.500" style="font-style:italic;fill:#8f8f8f">Rotation</text>
<text x="37.500" y="596.500" style="font-style:italic;fill:#8f8f8f">Scale</text>
<use href="#kf" x="221.500" y="569.500"/>
<g transform="translate(221.500 581)"><path d="M0 0 3.500-2.500V2.500z" fill="#ccc"/><circle cx="8.300" r="1.900" fill="none" stroke="#ccc" stroke-width="1.100"/><path d="M16.500 0 13-2.500V2.500z" fill="#ccc"/></g>
<use href="#kf" x="221.500" y="592.500"/>

<!-- timeline -->
<rect x="244" y="513" width="540" height="159" fill="#1c1c1c"/>
<rect x="244" y="533" width="540" height="16" fill="#222"/>
<rect x="300" y="599" width="412" height="73" fill="#232323"/>
<rect x="300" y="534" width="416" height="13" fill="#65656f"/>
<rect x="300" y="546" width="416" height="1.200" fill="#3f3f46"/>
<rect x="244" y="549" width="540" height="14" fill="#47706a"/>
<rect x="712" y="549" width="72" height="14" fill="#3f635e"/>
<rect x="244" y="563.500" width="540" height="12" fill="#1f2a29"/>
<rect x="244" y="575.500" width="540" height="12" fill="#263231"/>
<rect x="244" y="587.500" width="540" height="12" fill="#1f2a29"/>
<path d="M299 599V672M403 599V672M507 599V672M612 599V672M716 599V672" stroke="#1a1a1a"/>
<path d="M299 569H716M299 581H716M299 593H716" stroke="#47706a" stroke-width="1.200"/>
<g fill="#f47a7a"><circle cx="299.300" cy="569" r="2.500"/><circle cx="299.300" cy="581" r="2.500"/><circle cx="299.300" cy="593" r="2.500"/><circle cx="508" cy="569" r="2.700"/><circle cx="508" cy="581" r="2.700"/><circle cx="508" cy="593" r="2.700"/></g>
<g fill="#6d4444"><circle cx="716.700" cy="569" r="2.500"/><circle cx="716.700" cy="581" r="2.500"/><circle cx="716.700" cy="593" r="2.500"/></g>
<path d="M299.300 513V533" stroke="#3a3a3a"/>
<path d="M299.300 526V531M403.300 526V531M507.500 526V531M612 526V531M720 526V531" stroke="#b4b4b4"/>
<text x="302.500" y="530.500" class="d" style="font-size:7.300px">[00:00:00:00]</text>
<text x="406.500" y="530.500" class="d" style="font-size:7.300px">[00:00:05:00]</text>
<text x="511" y="530.500" class="d" style="font-size:7.300px">[00:00:10:00]</text>
<text x="615.500" y="530.500" class="d" style="font-size:7.300px">[00:00:15:00]</text>
<text x="720" y="530.500" class="d" style="font-size:7.300px">[00:00:20:00]</text>
<rect x="299.600" y="513" width="1" height="159" fill="#2e8a2e"/>
<path d="M299.500 513H303L300.500 516z" fill="#2ea82e"/>
<path d="M297 672H302L300 668z" fill="#2ea82e"/>
<rect x="711.800" y="513" width="1" height="159" fill="#7a1f1f"/>
<rect x="670.200" y="531" width="1" height="141" fill="#c8c8c8"/>
<path d="M667.300 513.500H674.300V529L670.800 531.500 667.300 529z" fill="#93482f"/>
<text x="677" y="520.500" style="fill:#c4c4c4">[00:00:17:24]</text>
<rect x="711.800" y="513" width="1" height="12" fill="#8a2020"/>

<!-- transport -->
<rect x="10" y="599" width="232" height="73" fill="#1c1c1c"/>
<rect x="13" y="660" width="30" height="13" fill="#222"/>
<text x="15" y="670">2 items</text>
<rect x="10" y="672" width="234" height="23" fill="#222"/>
<rect x="244" y="672" width="540" height="23" fill="#181818"/>
<rect x="242" y="513" width="2" height="182" fill="#141414"/>
<circle cx="42.300" cy="683.300" r="5.500" fill="none" stroke="#787878"/><circle cx="42.300" cy="683.300" r="3.700" fill="#7a2b2b"/>
<g fill="#b4b4b4">
<path d="M59 678H62.500V679H60.500V687.500H59z"/>
<path d="M68.500 683.300 72.500 679V687.500zM73.500 679H75V687.500H73.500zM76 679H77.500V687.500H76z"/>
<path d="M84 683.300 87.500 679.500V687zM89 681 91 683.300 89 685.500z"/><circle cx="93" cy="683.300" r="1.700" fill="none" stroke="#b4b4b4"/>
<path d="M100.500 683.300 104.500 679V687.500zM105.500 679H107.500V687.500H105.500z"/>
<path d="M116 683.300 125 678V688.500z"/>
<path d="M133.500 677.500 143.500 683.300 133.500 689z"/>
<rect x="152" y="679" width="2" height="8.500"/><path d="M155 679 159.500 683.300 155 687.500z"/>
<path d="M165 683.300 167 681 169 683.300 167 685.500z" fill="none" stroke="#b4b4b4"/><path d="M170 679.500 174 683.300 170 687z"/>
<rect x="179" y="679" width="1.500" height="8.500"/><rect x="181.500" y="679" width="1.500" height="8.500"/><path d="M184 679 188.500 683.300 184 687.500z"/>
<path d="M196 678H199V687.500H196V686.500H197.800V679H196z"/>
</g>
<path d="M206 685V681H213.500M214.500 682V686H207" fill="none" stroke="#b4b4b4" stroke-width="1.300"/><path d="M212.500 679 215 681 212.500 683zM208 684 205.500 686 208 688z" fill="#b4b4b4"/>
<text x="247" y="686" class="d" style="font-size:7.800px">[- 00:00:05:02•]</text>
<path d="M246 688.500H301.500" stroke="#5a5a5a" stroke-width=".8"/>
<text x="307" y="686" class="d" style="font-size:7.800px">[- 00:00:02:20•]</text>
<path d="M306 688.500H362" stroke="#5a5a5a" stroke-width=".8"/>
<rect x="387" y="679.500" width="258" height="8.500" fill="#5d5d5d"/>
<rect x="387" y="679.500" width="9" height="8.500" fill="#8c8c8c"/>
<rect x="636" y="679.500" width="9" height="8.500" fill="#8c8c8c"/>
<text x="678" y="686" class="d" style="font-size:7.800px">[00:00:23:04•]</text>
<path d="M677 688.500H728" stroke="#5a5a5a" stroke-width=".8"/>
<text x="732.500" y="686" class="d" style="font-size:7.800px">[00:00:26:09•]</text>
<path d="M731 688.500H782" stroke="#5a5a5a" stroke-width=".8"/>

<!-- status bar -->
<rect x="8" y="696" width="1192" height="18.500" fill="#232323"/>
<rect x="8" y="714.500" width="1192" height="1" fill="#383838"/>
<rect x="8" y="715.500" width="1192" height="6.500" fill="#1b1b1b"/>
<rect x="48" y="721" width="125" height="1" fill="#ddd"/>
<rect x="401" y="721" width="25" height="1" fill="#383838"/>
<rect x="89" y="696" width="1" height="18" class="sep"/><rect x="154" y="696" width="1" height="18" class="sep"/><rect x="383" y="696" width="1" height="18" class="sep"/><rect x="877" y="696" width="1" height="18" class="sep"/><rect x="957" y="696" width="1" height="18" class="sep"/><rect x="1043" y="696" width="1" height="18" class="sep"/><rect x="1049" y="696" width="1" height="18" class="sep"/>
<rect x="14" y="702" width="5" height="8" fill="#a8a8a8"/><rect x="15" y="700" width="3" height="2" fill="#a8a8a8"/><circle cx="22.500" cy="707" r="2.300" fill="none" stroke="#a8a8a8"/>
<text x="27" y="708.500" style="font-size:8px">Content Drawer</text>
<rect x="97" y="700" width="7" height="10" fill="#b4b4b4"/><path d="M98.500 704 100.500 705.500 98.500 707" stroke="#232323" fill="none"/>
<text x="109" y="708.500" style="font-size:8px">Output Log</text>
<rect x="164" y="702" width="9.500" height="7.500" fill="none" stroke="#b4b4b4"/><path d="M165.500 704 167 705.500 165.500 707M168 707.500H171" stroke="#b4b4b4" stroke-width=".8" fill="none"/>
<text x="176" y="708.500" style="font-size:8px">Cmd</text>
<use href="#chev" x="199.500" y="705.500"/>
<rect x="211" y="700" width="165" height="13" rx="1" fill="#0d0d0d"/>
<text x="216" y="708.500" class="m">Enter Console Command</text>
<path d="M886 711 888.500 707M888 701H895V707H888z" fill="none" stroke="#a0a0a0"/>
<text x="897" y="708.500" style="font-size:8px">Trace</text>
<circle cx="933" cy="705.500" r="4.200" fill="#b0b0b0"/><circle cx="933" cy="704.500" r="1.800" fill="#232323"/><rect x="931" y="707.500" width="4" height="1" fill="#232323"/>
<rect x="943.500" y="702.500" width="10" height="7.500" fill="#a0a0a0"/><circle cx="948.500" cy="706" r="2" fill="#232323"/><rect x="946" y="700.500" width="5" height="2" fill="#a0a0a0"/>
<path d="M966 701.500H975M966 704.500H975M966 707.500H975M966 710H975" stroke="#b0b0b0" stroke-width="1.700"/>
<text x="977.500" y="708.500" style="font-size:8px">Derived Data</text>
<path d="M1033 710.500H1036V707.500" stroke="#7a7a7a" fill="none" stroke-width=".7"/>
<path d="M1057 700H1063L1065 702V708H1057z" fill="#a8a8a8"/><path d="M1064 706 1065 708 1067.300 708.300 1065.600 709.800 1066 712 1064 711 1062 712 1062.400 709.800 1060.700 708.300 1063 708z" fill="#c8c8c8"/>
<text x="1070" y="708.500" style="font-size:8px">3 Unsaved</text>
<rect x="1120" y="700" width="3.500" height="3" fill="#c8c8c8"/><rect x="1126" y="700" width="3.500" height="3" fill="#c8c8c8"/><rect x="1120" y="708" width="3.500" height="3" fill="#c8c8c8"/><path d="M1121.800 703V708M1127.800 703V705H1122" stroke="#c8c8c8" fill="none"/>
<text x="1131.500" y="708.500" style="font-size:8px">Revision Control</text>
<path d="M1193 710.500H1195.500V708" stroke="#7a7a7a" fill="none" stroke-width=".7"/>
</svg>
</body>
</html>
